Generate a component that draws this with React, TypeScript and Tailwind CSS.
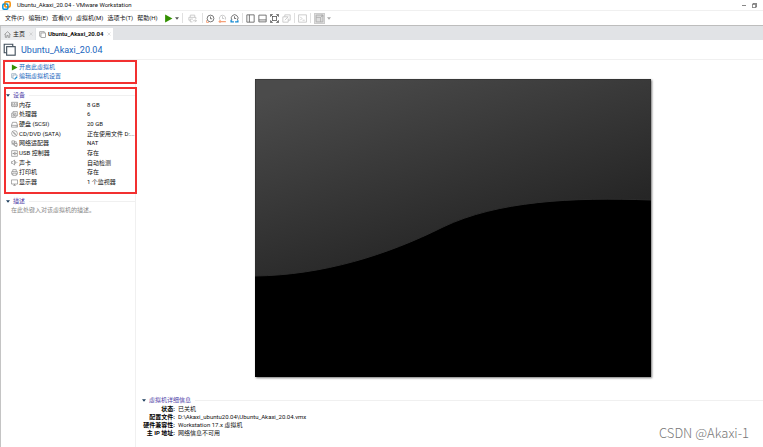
import { useState } from "react";
import type { ReactNode } from "react";
import clsx from "clsx";

function Icon({ children, className }: { children: ReactNode; className?: string }) {
  return (
    <svg
      viewBox="0 0 16 16"
      fill="none"
      stroke="currentColor"
      strokeWidth="1.4"
      className={clsx("shrink-0", className)}
      aria-hidden="true"
    >
      {children}
    </svg>
  );
}

const clockFace = (
  <>
    <circle cx="8" cy="8" r="6" />
    <path d="M8 4.5V8.5H11" />
  </>
);

const icons = {
  logo: (
    <>
      <rect x="5" y="1.5" width="9.500" height="9" rx="2" stroke="#f38b00" strokeWidth="2.6" />
      <rect x="1.5" y="5.500" width="9" height="9" rx="2" stroke="#0091da" strokeWidth="2.6" />
      <path d="M5.500 9V4" stroke="#f38b00" strokeWidth="2" />
    </>
  ),
  vm: (
    <>
      <path d="M4 12H1.5V1.5H12V4" />
      <rect x="4.5" y="4.5" width="10.5" height="10.5" />
    </>
  ),
  home: <path d="M1 8 8 1.5 15 8M3 7v7.5h3.5V10h3v4.5H13V7" />,
  close: <path d="M2 2l12 12M14 2 2 14" strokeWidth="2" />,
  play: <path d="M2 1 15 8 2 15z" fill="#329000" stroke="none" />,
  send: <path d="M4 6V2h8v4M4 11H1.5V6H14v3M4 9h5M4 9v5h4M9 12h6M12.5 9.5 15 12l-2.5 2.5" />,
  snapshot: (
    <>
      {clockFace}
      <path d="M1 11v4h4" stroke="#f5a078" strokeWidth="1.6" />
    </>
  ),
  revert: (
    <>
      <path d="M3 10a5.5 5.5 0 1 1 10 0M8 4v4h3" stroke="#bcbcbc" />
      <path d="M2 13.5h12M4.500 11 2 13.500l2.500 2" stroke="#f5a078" strokeWidth="2" />
    </>
  ),
  manage: (
    <>
      <path d="M3.500 11a6 6 0 1 1 9.500 0M8 4v4h3" />
      <path d="M2 10v4h5M9 14h5v-3" stroke="#168bd2" strokeWidth="2.4" />
    </>
  ),
  sidebar: <path d="M1.500 1.500h13v13h-13zM6 1.500v13" />,
  bottomBar: <path d="M1.500 2h13v12h-13zM1.500 10.500h13" />,
  fullscreen: (
    <>
      <rect x="4.500" y="4.500" width="7" height="7" />
      <path d="M1 5V1h4M11 1h4v4M15 11v4h-4M5 15H1v-4M1 1l3.500 3.500M15 1l-3.500 3.500M15 15l-3.500-3.500M1 15l3.500-3.500" />
    </>
  ),
  unity: <path d="M5 5V1.500h9.500V11H11M1.500 5H8M1.500 5v9.500H11V8M5 11l6-6M7.500 5H11" />,
  console: <path d="M1 1.500h14v13H1zM4 5l3 3-3 3M8 11h4" />,
  stretch: <path d="M2 2h12v12H2zM2 6h8v8M10 6l4-4M11 2h3v3" />,
  settings: (
    <>
      <path d="M4 11H1.500V1.500H11V4M14 8V4.500H4.500V13H7" />
      <path d="M8 14.500l6-6" stroke="#168bd2" strokeWidth="3" />
    </>
  ),
  memory: <path d="M1 3h14v9H1zM1 9h14M4 4.500V8M8 4.500V8M12 4.500V8M4 12v2M8 12v2M12 12v2" />,
  cpu: <path d="M1.500 5h9.500v9.500H1.500zM4.500 5V1.500H14.500V11H11M4.500 8h3.500v3.500H4.500z" />,
  disk: <path d="M1 10 3.500 3h9L15 10v4H1zM1 10h14M11 12h2" />,
  cd: (
    <>
      <circle cx="8" cy="8" r="6.500" />
      <circle cx="8" cy="8" r="1.500" />
      <path d="M3.500 3.500 7 7M9 9l3.500 3.500" />
    </>
  ),
  network: <path d="M2 2h6v5H2zM8 8h6v5H8zM5 7v4h3M8 4h4v4M1 9h4M10 15h4" />,
  usb: <path d="M1.500 1.500h13v13h-13zM3.500 8h9M10.500 6l2 2-2 2M6 8l2-3h2M6 8l2 3h2" />,
  sound: <path d="M1 6h3l4-4v12l-4-4H1zM10.500 5v6M13.500 7v2" />,
  printer: <path d="M4 6V1.500h8V6M4 12H1.500V6h13v6H12M4 9.500h8v5H4z" />,
  display: <path d="M1 2h14v9.500H1zM5 14.500h6M8 11.500v3" />,
};

type IconName = keyof typeof icons;

const menus = ["文件(F)", "编辑(E)", "查看(V)", "虚拟机(M)", "选项卡(T)", "帮助(H)"];

const devices: { icon: IconName; name: string; value: string }[] = [
  { icon: "memory", name: "内存", value: "8 GB" },
  { icon: "cpu", name: "处理器", value: "6" },
  { icon: "disk", name: "硬盘 (SCSI)", value: "20 GB" },
  { icon: "cd", name: "CD/DVD (SATA)", value: "正在使用文件 D:..." },
  { icon: "network", name: "网络适配器", value: "NAT" },
  { icon: "usb", name: "USB 控制器", value: "存在" },
  { icon: "sound", name: "声卡", value: "自动检测" },
  { icon: "printer", name: "打印机", value: "存在" },
  { icon: "display", name: "显示器", value: "1 个监视器" },
];

const details = [
  { label: "状态:", value: "已关机" },
  { label: "配置文件:", value: "D:\\Akaxi_ubuntu20.04\\Ubuntu_Akaxi_20.04.vmx" },
  { label: "硬件兼容性:", value: "Workstation 17.x 虚拟机" },
  { label: "主 IP 地址:", value: "网络信息不可用" },
];

function ToolButton({ icon, label, className }: { icon: IconName; label: string; className?: string }) {
  return (
    <button aria-label={label} className={clsx("flex", className)}>
      <Icon className="size-[9px]">{icons[icon]}</Icon>
    </button>
  );
}

function Separator() {
  return <span className="h-2.5 w-px bg-[#e0e0e0]" />;
}

function Caret({ className }: { className?: string }) {
  return (
    <svg viewBox="0 0 8 5" className={clsx("h-[3px] w-1 shrink-0", className)} aria-hidden="true">
      <path d="M0 0h8L4 5z" fill="currentColor" />
    </svg>
  );
}

function SectionTitle({ title, open, onToggle }: { title: string; open: boolean; onToggle: () => void }) {
  return (
    <h2 className="flex items-center text-[6px] leading-[10px] text-[#5143a8]">
      <button onClick={onToggle} aria-expanded={open} className="flex items-center gap-[3px]">
        <Caret className={clsx("text-[#1c3d5c]", !open && "-rotate-90")} />
        {title}
      </button>
      <span className="ml-1 h-px flex-1 bg-[#f0f0f0]" />
    </h2>
  );
}

export default function App() {
  const [openSections, setOpenSections] = useState({ devices: true, description: true, details: true });

  const toggle = (key: keyof typeof openSections) => {
    setOpenSections((prev) => ({ ...prev, [key]: !prev[key] }));
  };

  return (
    <div className="flex min-h-screen flex-col bg-white font-[Roboto,'Noto_Sans_CJK_SC',sans-serif] text-[6px] leading-2 text-[#111]">
      <header>
        <div className="flex h-[11px] items-center border-b border-[#f0f0f0] pr-1.5 pl-0.5">
          <Icon className="size-[9px]">{icons.logo}</Icon>
          <h1 className="ml-1.5 flex-1">Ubuntu_Akaxi_20.04 - VMware Workstation</h1>
          <button aria-label="最小化" className="mr-1.5 flex h-2 w-1 items-center">
            <span className="h-px w-full bg-[#888]" />
          </button>
          <button aria-label="还原" className="flex text-[#555]">
            <Icon className="size-[5px]">
              <path d="M1 4h11v11H1zM4 4V1h11v11h-3" strokeWidth="2.500" />
            </Icon>
          </button>
        </div>

        <div className="flex h-[15px] items-center border-b border-[#bdbdbd] pl-[5px]">
          <nav className="flex gap-1">
            {menus.map((menu) => (
              <button key={menu} className="whitespace-nowrap">
                {menu}
              </button>
            ))}
          </nav>
          <div className="ml-1.5 flex items-center gap-[3px] text-[#555]">
            <div className="flex items-center gap-0.5">
              <ToolButton icon="play" label="开启" />
              <Caret />
            </div>
            <Separator />
            <ToolButton icon="send" label="发送" className="mx-0.5 text-[#c0c0c0]" />
            <Separator />
            <ToolButton icon="snapshot" label="拍摄快照" />
            <ToolButton icon="revert" label="恢复快照" />
            <ToolButton icon="manage" label="管理快照" />
            <Separator />
            <ToolButton icon="sidebar" label="显示库" />
            <ToolButton icon="bottomBar" label="缩略图" />
            <ToolButton icon="fullscreen" label="全屏" />
            <ToolButton icon="unity" label="Unity" className="text-[#c0c0c0]" />
            <Separator />
            <ToolButton icon="console" label="控制台" className="text-[#c0c0c0]" />
            <Separator />
            <div className="flex items-center gap-0.5 text-[#aaa]">
              <ToolButton icon="stretch" label="拉伸" className="border border-[#ccc] bg-[#dedede]" />
              <Caret />
            </div>
          </div>
        </div>
      </header>

      <div className="flex flex-1 flex-col border-l border-[#c4c4c4]">
        <div role="tablist" className="flex h-3.5 items-end bg-[#e1e3e6]">
          <div className="flex h-3 items-center bg-[#eaebed] pr-0.5 pl-[3px]">
            <button role="tab" aria-selected={false} className="flex items-center gap-0.5">
              <Icon className="size-[7px] text-[#777]">{icons.home}</Icon>
              主页
            </button>
            <button aria-label="关闭主页" className="ml-1 text-[#bbb]">
              <Icon className="size-1">{icons.close}</Icon>
            </button>
          </div>
          <div className="ml-px flex h-3 items-center bg-white pr-0.5 pl-[3px]">
            <button role="tab" aria-selected className="flex items-center gap-0.5 font-bold">
              <Icon className="size-[7px] text-[#777]">{icons.vm}</Icon>
              Ubuntu_Akaxi_20.04
            </button>
            <button aria-label="关闭标签" className="ml-1 text-[#bbb]">
              <Icon className="size-1">{icons.close}</Icon>
            </button>
          </div>
        </div>

        <div className="flex h-5 items-center gap-[5px] border-b border-[#f0f0f0] pl-0.5">
          <Icon className="size-[13px] text-[#43505c]">{icons.vm}</Icon>
          <h2 className="text-[9px] leading-3 text-[#1965bd]">Ubuntu_Akaxi_20.04</h2>
        </div>

        <div className="flex flex-1">
          <aside className="w-[135px] shrink-0 border-r border-[#f0f0f0] pl-0.5">
            <div className="-mr-0.5 flex h-6 flex-col justify-center border-2 border-[#f23030] pb-px pl-1.5 text-[#1965bd]">
              <button className="flex h-[9px] items-center gap-px">
                <Icon className="size-[7px]">{icons.play}</Icon>
                开启此虚拟机
              </button>
              <button className="flex h-[9px] items-center gap-px">
                <Icon className="size-[7px] text-[#7c98ad]">{icons.settings}</Icon>
                编辑虚拟机设置
              </button>
            </div>

            <section className="mt-[3px] -mr-0.5 ml-px border-2 border-[#f23030] pt-px pb-[5px]">
              <SectionTitle title="设备" open={openSections.devices} onToggle={() => toggle("devices")} />
              {openSections.devices && (
                <table className="h-[87px] w-full">
                  <tbody>
                    {devices.map((device) => (
                      <tr key={device.name}>
                        <th scope="row" className="w-[81px] p-0 pl-[5px] font-normal">
                          <span className="flex items-center gap-px whitespace-nowrap">
                            <Icon className="size-[7px] text-[#777]">{icons[device.icon]}</Icon>
                            {device.name}
                          </span>
                        </th>
                        <td className="p-0 whitespace-nowrap">{device.value}</td>
                      </tr>
                    ))}
                  </tbody>
                </table>
              )}
            </section>

            <section className="mt-0.5 ml-[3px]">
              <SectionTitle
                title="描述"
                open={openSections.description}
                onToggle={() => toggle("description")}
              />
              {openSections.description && (
                <p className="pl-[5px] text-[#888]">在此处键入对该虚拟机的描述。</p>
              )}
            </section>
          </aside>

          <main className="flex flex-1 flex-col pl-1.5">
            <div className="mt-[19px] flex justify-center">
              <svg
                viewBox="0 0 396 298"
                className="w-[396px] shadow-[1px_1px_2px_#777]"
                role="img"
                aria-label="虚拟机屏幕"
              >
                <defs>
                  <linearGradient id="gloss" gradientUnits="userSpaceOnUse" x1="35" y1="10" x2="105" y2="235">
                    <stop offset="0" stopColor="#4b4b4b" />
                    <stop offset="1" stopColor="#212121" />
                  </linearGradient>
                </defs>
                <path d="M0 0h396v298H0z" fill="#000" />
                <path
                  d="M0 0H396V121C317 118 242 122 188 148C132 176 68 196 0 197Z"
                  fill="url(#gloss)"
                  stroke="#2c2c2c"
                  strokeWidth="1"
                />
              </svg>
            </div>

            <section className="mt-[18px]">
              <SectionTitle
                title="虚拟机详细信息"
                open={openSections.details}
                onToggle={() => toggle("details")}
              />
              {openSections.details && (
                <dl className="grid grid-cols-[33px_1fr] gap-x-[3px]">
                  {details.map((item) => (
                    <div key={item.label} className="contents">
                      <dt className="text-right font-bold whitespace-nowrap text-black">{item.label}</dt>
                      <dd>{item.value}</dd>
                    </div>
                  ))}
                </dl>
              )}
            </section>

            <footer className="mr-3.5 -mt-3 pb-1.5 text-right font-['Noto_Sans_CJK_SC',sans-serif] text-[13px] leading-4 font-light text-[#777]">
              CSDN @Akaxi-1
            </footer>
          </main>
        </div>
      </div>
    </div>
  );
}
